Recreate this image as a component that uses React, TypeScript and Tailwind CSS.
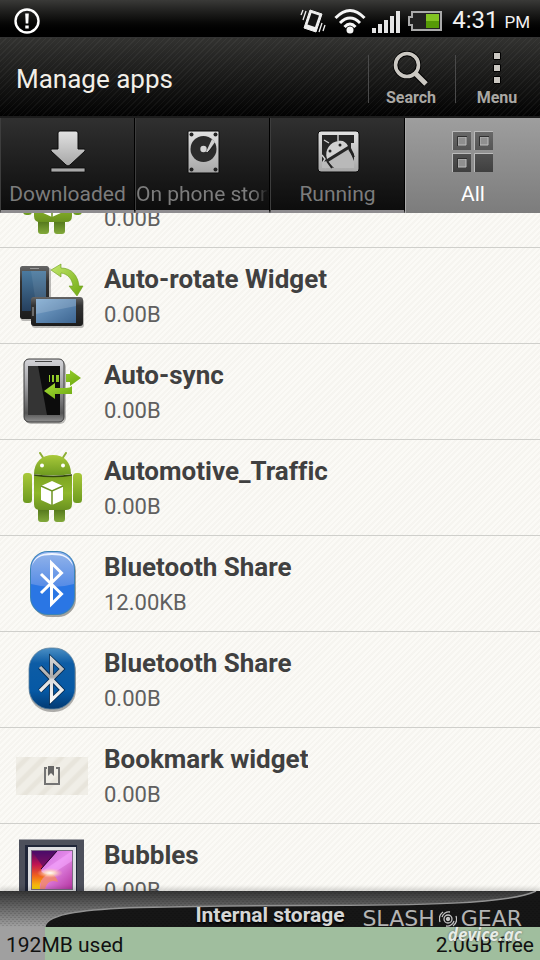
import { useState } from 'react';

interface AppEntry {
  id: string;
  name: string;
  size: string;
  icon: React.ReactNode;
}

function AndroidIcon() {
  return (
    <svg viewBox="0 0 72 72" className="w-full h-full">
      <defs>
        <linearGradient id="droid" x1="0" y1="0" x2="0" y2="1"><stop offset="0" stopColor="#a9c93a" /><stop offset="1" stopColor="#6d9a1f" /></linearGradient>
        <linearGradient id="droidBody" x1="0" y1="0" x2="0" y2="1"><stop offset="0" stopColor="#7da521" /><stop offset=".5" stopColor="#8fb72b" /><stop offset="1" stopColor="#6a9220" /></linearGradient>
        <linearGradient id="droidLeg" x1="0" y1="0" x2="0" y2="1"><stop offset="0" stopColor="#4c6e16" /><stop offset="1" stopColor="#82a93a" /></linearGradient>
      </defs>
      <path d="M24 1l4 6M50 1l-4 6" stroke="#8cae33" strokeWidth="2" strokeLinecap="round" />
      <path d="M22 55h11v12q0 3-3 3h-5q-3 0-3-3zM38 55h11v12q0 3-3 3h-5q-3 0-3-3z" fill="url(#droidLeg)" />
      <rect x="7" y="21" width="9" height="30" rx="3.500" fill="url(#droid)" />
      <rect x="57" y="21" width="9" height="30" rx="3.500" fill="url(#droid)" />
      <path d="M18 24h38v28q0 6-6 6H24q-6 0-6-6z" fill="url(#droidBody)" />
      <path d="M18 22C18 10 26 3 37 3s18 7 18 19q-18 3-37 0z" fill="url(#droid)" />
      <path d="M18 23q19 3 38 0" stroke="#34480f" strokeWidth="1.600" fill="none" />
      <circle cx="26" cy="13.500" r="2" fill="#fff" /><circle cx="47" cy="13.500" r="2" fill="#fff" />
      <path d="M25 34l11-5 11 5v14l-11 5-11-5z" fill="#fff" />
      <path d="M25 34l11 5 11-5M36 39v14" stroke="#6d9422" strokeWidth="1.500" fill="none" />
    </svg>
  );
}

function RotateIcon() {
  return (
    <svg viewBox="0 0 72 72" className="w-full h-full">
      <defs>
        <linearGradient id="rotA" x1="0" y1="0" x2="0" y2="1"><stop offset="0" stopColor="#4b7ba0" /><stop offset="1" stopColor="#253f5d" /></linearGradient>
        <linearGradient id="rotB" x1="0" y1="0" x2="1" y2="1"><stop offset="0" stopColor="#7ba7cf" /><stop offset="1" stopColor="#3d6591" /></linearGradient>
        <linearGradient id="rotC" x1="0" y1="0" x2="1" y2="1"><stop offset="0" stopColor="#c4e86d" /><stop offset="1" stopColor="#6fa910" /></linearGradient>
        <linearGradient id="rotD" x1="0" y1="0" x2="0" y2="1"><stop offset="0" stopColor="#666" /><stop offset=".3" stopColor="#333" /><stop offset="1" stopColor="#1c1c1c" /></linearGradient>
      </defs>
      <rect x="5" y="8" width="30" height="53" rx="2" fill="#000" opacity=".25" />
      <rect x="4" y="6" width="29" height="53" rx="2.500" fill="url(#rotD)" />
      <rect x="6" y="11" width="24" height="40" fill="url(#rotA)" />
      <path d="M15 11h15v40H21z" fill="#fff" opacity=".08" />
      <path d="M14 8.500h9" stroke="#999" />
      <rect x="16" y="39" width="52" height="29" rx="3" fill="#000" opacity=".25" />
      <rect x="15" y="37" width="52" height="29" rx="3" fill="url(#rotD)" />
      <rect x="20" y="39" width="40" height="24" fill="url(#rotB)" />
      <path d="M20 39h40v7L20 54z" fill="#fff" opacity=".16" />
      <path d="M17 47v9" stroke="#aaa" />
      <path d="M35 10l10-6v4c11 0 17 8 18 18h4l-6 10-8-10h4c-1-7-5-12-12-13v4z" fill="url(#rotC)" stroke="#6c9c1c" strokeWidth=".6" />
    </svg>
  );
}

function SyncIcon() {
  return (
    <svg viewBox="0 0 72 72" className="w-full h-full">
      <defs>
        <linearGradient id="syncA" x1="0" y1="0" x2="0" y2="1"><stop offset="0" stopColor="#d4d4d8" /><stop offset=".4" stopColor="#a3a3a6" /><stop offset=".86" stopColor="#555" /><stop offset="1" stopColor="#909090" /></linearGradient>
        <linearGradient id="syncB" x1="0" y1="0" x2="1" y2="1"><stop offset="0" stopColor="#a5dc36" /><stop offset="1" stopColor="#6ca80f" /></linearGradient>
      </defs>
      <rect x="9" y="5" width="41" height="63" rx="6" fill="#000" opacity=".25" />
      <rect x="8" y="3" width="40" height="63" rx="5" fill="url(#syncA)" stroke="#3c3c3c" />
      <path d="M19 5.500h17" stroke="#444" />
      <rect x="12" y="10" width="32" height="49" fill="#0c0c0c" />
      <path d="M12 10h10l9 49H12z" fill="#343434" />
      <path d="M33 19h1v7h-1zM36 19h2v7h-2zM40 19h3v7h-3zM50 18h4v-4l11 8-11 8v-4h-4z" fill="url(#syncB)" />
      <path d="M28 35l11-8v5h11q4 0 6-2v8H39v5z" fill="url(#syncB)" />
    </svg>
  );
}

function BluetoothIcon() {
  return (
    <svg viewBox="0 0 72 72" className="w-full h-full">
      <defs>
        <linearGradient id="btA" x1="0" y1="0" x2="0" y2="1"><stop offset="0" stopColor="#93b4ea" /><stop offset="1" stopColor="#558be6" /></linearGradient>
        <clipPath id="btClip"><rect x="15" y="4" width="43" height="62" rx="17" /></clipPath>
      </defs>
      <rect x="16" y="5" width="44" height="64" rx="18" fill="#000" opacity=".35" />
      <rect x="14" y="3" width="45" height="64" rx="18" fill="#3b83b5" />
      <g clipPath="url(#btClip)">
        <rect x="15" y="4" width="43" height="62" fill="#2a76e4" />
        <path d="M15 4h43v32q-21 6-43 0z" fill="url(#btA)" />
      </g>
      <path d="M16 18C18 9 24 5 36 5s19 4 21 13C53 10 48 7 36 7s-17 3-20 11z" fill="#eef4ff" />
      <path d="M25 26l20.500 20L35.500 56V15l10 10L25 45" fill="none" stroke="#fff" strokeWidth="3" />
    </svg>
  );
}

function BluetoothDarkIcon() {
  return (
    <svg viewBox="0 0 72 72" className="w-full h-full">
      <defs>
        <linearGradient id="bdA" x1="0" y1="0" x2="0" y2="1"><stop offset="0" stopColor="#4b8fc4" /><stop offset=".25" stopColor="#0d5ca5" /><stop offset=".7" stopColor="#0659a5" /><stop offset="1" stopColor="#033a72" /></linearGradient>
        <linearGradient id="bdB" x1="0" y1="11" x2="0" y2="60" gradientUnits="userSpaceOnUse"><stop offset="0" stopColor="#ddd" /><stop offset=".45" stopColor="#aaa" /><stop offset=".5" stopColor="#ddd" /><stop offset="1" stopColor="#fff" /></linearGradient>
      </defs>
      <rect x="13" y="6" width="47" height="62" rx="22" fill="#000" opacity=".3" />
      <rect x="13" y="4" width="46" height="61" rx="21" fill="url(#bdA)" stroke="#5c7f9b" strokeWidth=".8" />
      <path d="M24 23l22 23-10.500 10V15L46 25 24 47" fill="none" stroke="#04284d" strokeWidth="4.800" />
      <path d="M24 23l22 23-10.500 10V15L46 25 24 47" fill="none" stroke="url(#bdB)" strokeWidth="3.200" />
    </svg>
  );
}

function BookmarkIcon() {
  return (
    <div className="w-full h-[38px] flex items-center justify-center bg-[repeating-linear-gradient(135deg,#f0eee7_0px,#f0eee7_5px,#e8e5dc_7px,#e8e5dc_10px,#f0eee7_12px)]">
      <svg viewBox="0 0 18 22" className="w-[18px] h-[22px]">
        <path d="M4 3H2v16h14V3h-3" fill="none" stroke="#747474" strokeWidth="2" />
        <path d="M5 1h6v10L8 8l-3 3z" fill="#666" />
      </svg>
    </div>
  );
}

function BubblesIcon() {
  return (
    <svg viewBox="0 0 72 72" className="w-full h-full">
      <defs>
        <linearGradient id="bubA" x1="0" y1="0" x2="1" y2="1"><stop offset="0" stopColor="#c05ad8" /><stop offset=".5" stopColor="#e58bea" /><stop offset="1" stopColor="#b4359f" /></linearGradient>
        <linearGradient id="bubB" x1="0" y1="0" x2="0" y2="1"><stop offset="0" stopColor="#4a0a63" /><stop offset=".35" stopColor="#c01352" /><stop offset=".65" stopColor="#f0621d" /><stop offset="1" stopColor="#f9d806" /></linearGradient>
        <radialGradient id="bubC"><stop offset="0" stopColor="#fff" /><stop offset=".4" stopColor="#ffe3c0" stopOpacity=".8" /><stop offset="1" stopColor="#ffb0b0" stopOpacity="0" /></radialGradient>
      </defs>
      <rect x="3" y="3" width="65" height="66" fill="#4d505b" />
      <path d="M3 3.500h65" stroke="#a3a4a9" />
      <rect x="9" y="9" width="52" height="54" fill="#202638" />
      <rect x="12" y="11" width="48" height="48" fill="#dedfe2" />
      <rect x="15" y="14" width="42" height="40" fill="#7d6c86" />
      <rect x="16" y="15" width="40" height="38" fill="url(#bubA)" />
      <path d="M16 15h25L27 31q-5 6 5 7-10 7-8 15h-8z" fill="url(#bubB)" />
      <path d="M16 15h25L27 31z" fill="#4a0b6c" opacity=".6" />
      <path d="M25 36L56 15v10L36 38z" fill="#f5a8ff" opacity=".55" />
      <path d="M24 53q0-13 10-16 6 2 8 9-10-4-13 7z" fill="#f38a62" opacity=".8" />
      <ellipse cx="34" cy="37" rx="13" ry="5" fill="url(#bubC)" />
      <path d="M41 15L25 33" stroke="#23042e" strokeWidth="1" />
    </svg>
  );
}

const APPS: AppEntry[] = [
  { id: 'android', name: 'Android System', size: '0.00B', icon: <AndroidIcon /> },
  { id: 'rotate', name: 'Auto-rotate Widget', size: '0.00B', icon: <RotateIcon /> },
  { id: 'sync', name: 'Auto-sync', size: '0.00B', icon: <SyncIcon /> },
  { id: 'traffic', name: 'Automotive_Traffic', size: '0.00B', icon: <AndroidIcon /> },
  { id: 'bt1', name: 'Bluetooth Share', size: '12.00KB', icon: <BluetoothIcon /> },
  { id: 'bt2', name: 'Bluetooth Share', size: '0.00B', icon: <BluetoothDarkIcon /> },
  { id: 'bookmark', name: 'Bookmark widget', size: '0.00B', icon: <BookmarkIcon /> },
  { id: 'bubbles', name: 'Bubbles', size: '0.00B', icon: <BubblesIcon /> },
];

const metal = (
  <defs>
    <linearGradient id="metal" x1="0" y1="0" x2="0" y2="1"><stop offset="0" stopColor="#e2e2e2" /><stop offset="1" stopColor="#a6a6a6" /></linearGradient>
    <linearGradient id="tile" x1="0" y1="0" x2="0" y2="1"><stop offset="0" stopColor="#686868" /><stop offset="1" stopColor="#3f3f3f" /></linearGradient>
  </defs>
);

const TABS = [
  {
    id: 'downloaded',
    label: 'Downloaded',
    icon: (
      <svg viewBox="0 0 44 44" className="w-11 h-11 shrink-0">
        {metal}
        <path d="M12 3q0-2 2-2h16q2 0 2 2v16h6q2 0 1 2L24 35q-2 2-4 0L5 21q-1-2 1-2h6z" fill="url(#metal)" stroke="#0b0b0b" />
        <path d="M5 38h34v4H5z" fill="#a9a9a9" stroke="#0b0b0b" strokeWidth=".8" />
      </svg>
    ),
  },
  {
    id: 'phone',
    label: 'On phone storage',
    icon: (
      <svg viewBox="0 0 44 44" className="w-11 h-11 shrink-0">
        <rect x="7" y="1" width="31" height="42" rx="1" fill="url(#metal)" stroke="#0b0b0b" />
        <circle cx="10.500" cy="4.500" r="2" fill="#222" /><circle cx="34.500" cy="4.500" r="2" fill="#222" />
        <circle cx="10.500" cy="39.500" r="2" fill="#222" /><circle cx="34.500" cy="39.500" r="2" fill="#222" />
        <circle cx="22.500" cy="19" r="13" fill="#2b2b2b" />
        <circle cx="22.500" cy="19" r="3.200" fill="#d5d5d5" />
        <path d="M31 9l3 3-7 10-2 0z" fill="#cfcfcf" />
        <path d="M33 16l-6 6" stroke="#222" strokeWidth="1" />
      </svg>
    ),
  },
  {
    id: 'running',
    label: 'Running',
    icon: (
      <svg viewBox="0 0 44 44" className="w-11 h-11 shrink-0">
        <rect x="2" y="1" width="41" height="41" rx="3" fill="url(#metal)" stroke="#0b0b0b" />
        <path d="M6 5h32v8h-3v5l3 6v14H6z" fill="#262626" />
        <path d="M11 29C8 19 15 12 22 11c5-1 8 1 10 5z" fill="#d2d2d2" />
        <path d="M12 32l21-13 5 12v7H18z" fill="#b9b9b9" />
        <path d="M13 13l-5-3M22 11V5M6 25l3 4-2 3 3 6" stroke="#d2d2d2" strokeWidth="1.400" fill="none" />
        <path d="M11 31l6 7H6v-6z" fill="#bbb" />
        <path d="M11 31l5 7M33 19l5 8" stroke="#222" strokeWidth="2" />
        <circle cx="14" cy="21" r="1.500" fill="#222" /><circle cx="24" cy="15" r="1.500" fill="#222" />
      </svg>
    ),
  },
  {
    id: 'all',
    label: 'All',
    icon: (
      <svg viewBox="0 0 44 44" className="w-11 h-11 shrink-0">
        <path d="M1.500 20V1.500H20M23.500 20V1.500H42M1.500 42V23.500H20M23.500 42V23.500H42" stroke="#bbb" fill="none" />
        <path d="M2 2h18v18H2zM24 2h18v18H24zM2 24h18v18H2zM24 24h18v18H24z" fill="url(#tile)" />
        <path d="M7 7h8v8H7zM29 7h8v8h-8zM7 29h8v8H7z" fill="#8f8f8f" stroke="#bcbcbc" />
        <path d="M6.500 16V6.500H16M28.500 16V6.500H38M6.500 38V28.500H16" stroke="#303030" fill="none" />
      </svg>
    ),
  },
];

function StatusBar() {
  return (
    <div className="h-[38px] shrink-0 flex items-center justify-between pt-1 pl-3.5 pr-2.5 bg-linear-to-b from-[#3a3a38] to-black border-b border-[#333]">
      <svg viewBox="0 0 26 26" className="w-[26px] h-[26px]" fill="none">
        <circle cx="13" cy="13" r="11.500" stroke="#fff" strokeWidth="2.400" />
        <path d="M11.200 5.500h3.600l-.5 10h-2.600zM11.300 17.500h3.400v3h-3.400z" fill="#fff" />
      </svg>
      <div className="flex items-center text-[#f2f2f2]">
        <svg viewBox="0 0 26 26" className="w-[26px] h-[26px]" fill="none" stroke="#eee">
          <path d="M10 2l12 4-6 18-12-4z" fill="#eee" strokeWidth="1" />
          <path d="M11.500 5l7.500 2.500-4 11.500-7.500-2.500z" fill="#141414" stroke="none" />
          <path d="M3 2L1 7M6 3L3 12M25 17l-2 6M22 15l-3 9" strokeWidth="1.300" />
        </svg>
        <svg viewBox="0 0 32 26" className="w-8 h-[26px] ml-2" fill="none" stroke="#f5f5f5" strokeWidth="3">
          <path d="M1.500 10Q16-5 30.500 10M6 15Q16 5 26 15M10.500 19q5.500-6 11 0" />
          <circle cx="16" cy="22" r="3.500" fill="#f5f5f5" stroke="none" />
        </svg>
        <svg viewBox="0 0 28 24" className="w-7 h-6 ml-1.5" fill="#e4e4e4">
          <path d="M0 19h4v5H0zM6 15h4v9H6zM12 11h4v13h-4zM18 7h4v17h-4zM24 2h4v22h-4z" />
        </svg>
        <svg viewBox="0 0 34 20" className="w-[34px] h-5 ml-2">
          <path d="M4 1h29v18H4v-5H1V6h3z" fill="#222" stroke="#aaa" strokeWidth="2" />
          <path d="M18 3h13v7H18z" fill="#83c423" /><path d="M18 10h13v7H18z" fill="#569b07" />
        </svg>
        <p className="ml-2.5 text-2xl leading-8">4:31 <span className="text-[17px] leading-8">PM</span></p>
      </div>
    </div>
  );
}

function Header() {
  return (
    <header className="h-20 shrink-0 flex items-center justify-between pt-1 border-b-2 border-[#1c1c1c] bg-[repeating-linear-gradient(135deg,rgba(255,255,255,0.04)_0px,rgba(255,255,255,0.04)_1px,transparent_1px,transparent_4px),linear-gradient(#323230,#020202)]">
      <h1 className="pl-4 text-[26px] leading-8 text-[#f2efe8]">Manage apps</h1>
      <div className="flex text-base leading-5 font-bold text-[#aaa8a4]">
        <button className="w-[87px] h-12 flex flex-col items-center justify-center gap-px pr-0.5 border-l border-[#4a4a4a]">
          <svg viewBox="0 0 36 36" className="w-9 h-9 shrink-0" fill="none">
            <path d="M22 22l11 11" stroke="#000" strokeWidth="7" />
            <circle cx="14" cy="14" r="11.500" stroke="#000" strokeWidth="5.500" />
            <path d="M22 22l11 11" stroke="#cbc8c2" strokeWidth="5" />
            <circle cx="14" cy="14" r="11.500" stroke="#cbc8c2" strokeWidth="3.600" />
          </svg>
          Search
        </button>
        <button className="w-[85px] h-12 flex flex-col items-center justify-center gap-px pr-0.5 border-l border-[#4a4a4a]">
          <svg viewBox="0 0 36 36" className="w-9 h-9 shrink-0" fill="#cbc8c2" stroke="#000">
            <path d="M14.500 1.500h7v7h-7zM14.500 13.500h7v7h-7zM14.500 25.500h7v7h-7z" />
          </svg>
          Menu
        </button>
      </div>
    </header>
  );
}

function StorageBar() {
  return (
    <footer className="relative shrink-0 shadow-[0_-3px_4px_rgba(0,0,0,0.15)]">
      <div className="relative h-9 bg-[#161616] overflow-hidden">
        <svg viewBox="0 0 540 36" preserveAspectRatio="none" className="absolute inset-0 w-full h-full">
          <defs>
            <linearGradient id="curve" x1="0" y1="0" x2="0" y2="1"><stop offset="0" stopColor="#343434" /><stop offset="1" stopColor="#a0a0a0" /></linearGradient>
            <pattern id="weave" width="4" height="4" patternUnits="userSpaceOnUse"><path d="M0 0h2v1H0zM2 2h2v1H2z" fill="#000" opacity=".12" /></pattern>
          </defs>
          <path d="M0 0H536C510 13 420 14.500 300 14.500C250 14.500 200 14.800 140 16.500C90 18 46 22 45 36H0z" fill="url(#curve)" />
          <rect width="540" height="36" fill="url(#weave)" />
          <path d="M45 36C46 22 90 18 140 16.500C200 14.800 250 14.500 300 14.500C420 14.500 510 13 536 0" fill="none" stroke="#929292" strokeWidth="1.500" />
        </svg>
        <p className="relative pt-3 text-center text-[21px] leading-6 font-bold text-[#d6d6d6] [text-shadow:0_2px_2px_#000]">Internal storage</p>
      </div>
      <div className="h-[33px] pt-0.5 flex justify-between items-center px-1.5 text-[21px] leading-8 text-[#111] bg-[linear-gradient(to_right,#a0a0a0_0%,#a0a0a0_8.33%,#a0be9e_8.33%,#a0be9e_100%)]">
        <span>192MB used</span>
        <span>2.0GB free</span>
      </div>
      {/* site mark laid over the bar */}
      <div className="absolute right-[18px] top-[18px] flex flex-col items-end font-['DejaVu_Sans',sans-serif] text-[#b4b4b4]">
        <div className="flex items-center gap-1 text-[22px] leading-5">
          <span>SLASH</span>
          <svg viewBox="0 0 18 18" className="w-[18px] h-[18px]" fill="none" stroke="#c4c4c4" strokeWidth="1.300">
            <circle cx="9" cy="9" r="1.500" fill="#c4c4c4" />
            <circle cx="9" cy="9" r="4" />
            <path d="M3 7a7 7 0 0 1 8-5M15 11a7 7 0 0 1-8 5M1 12A9 9 0 0 1 4 2M17 6a9 9 0 0 1-3 10" />
          </svg>
          <span>GEAR</span>
        </div>
        <span className="-mt-1 font-['Open_Sans',sans-serif] text-[17px] leading-5 font-bold italic text-[#e6ece6] [text-shadow:0_0_2px_#555]">device.ac</span>
      </div>
    </footer>
  );
}

export default function App() {
  const [active, setActive] = useState('all');

  return (
    <div className="h-screen flex flex-col overflow-hidden bg-black font-['Roboto',sans-serif] [font-variant-ligatures:none]">
      <StatusBar />
      <Header />

      <nav className="h-[95px] shrink-0 grid grid-cols-4 bg-linear-to-b from-[#303030] to-[#0c0c0c] border-b border-black">
        {TABS.map((t) => (
          <button
            key={t.id}
            onClick={() => setActive(t.id)}
            className={`min-w-0 flex flex-col items-center justify-start pt-3 border-l text-[21px] leading-8 ${active === t.id ? 'border-[#aaa] bg-linear-to-b from-[#9e9e9e] to-[#7c7c7c] text-white' : 'border-[#3d3d3d] border-r border-r-black border-b-4 border-b-[#8e8c8f] text-[#7c7c7c]'}`}
          >
            {t.icon}
            <span className={`mt-1 max-w-full overflow-hidden whitespace-nowrap ${t.label.length > 12 ? '[mask-image:linear-gradient(to_right,#000_88%,transparent)]' : ''}`}>{t.label}</span>
          </button>
        ))}
      </nav>

      <main className="flex-1 min-h-0 overflow-hidden bg-[#fbfaf6] bg-[repeating-linear-gradient(135deg,transparent_0px,transparent_2px,rgba(120,110,90,0.04)_2px,rgba(120,110,90,0.04)_4px)]">
        <ul className="-mt-[61px]">
          {APPS.map((a) => (
            <li key={a.id} className="h-24 flex items-center gap-4 px-4 border-b border-[#cfcfcb]">
              <div className="w-[72px] h-[72px] shrink-0 flex items-center">{a.icon}</div>
              <div className="min-w-0 pt-1">
                <h2 className="text-[26px] leading-[34px] font-bold text-[#404040] truncate">{a.name}</h2>
                <p className="text-[22px] leading-[38px] text-[#606060]">{a.size}</p>
              </div>
            </li>
          ))}
        </ul>
      </main>

      <StorageBar />
    </div>
  );
}
